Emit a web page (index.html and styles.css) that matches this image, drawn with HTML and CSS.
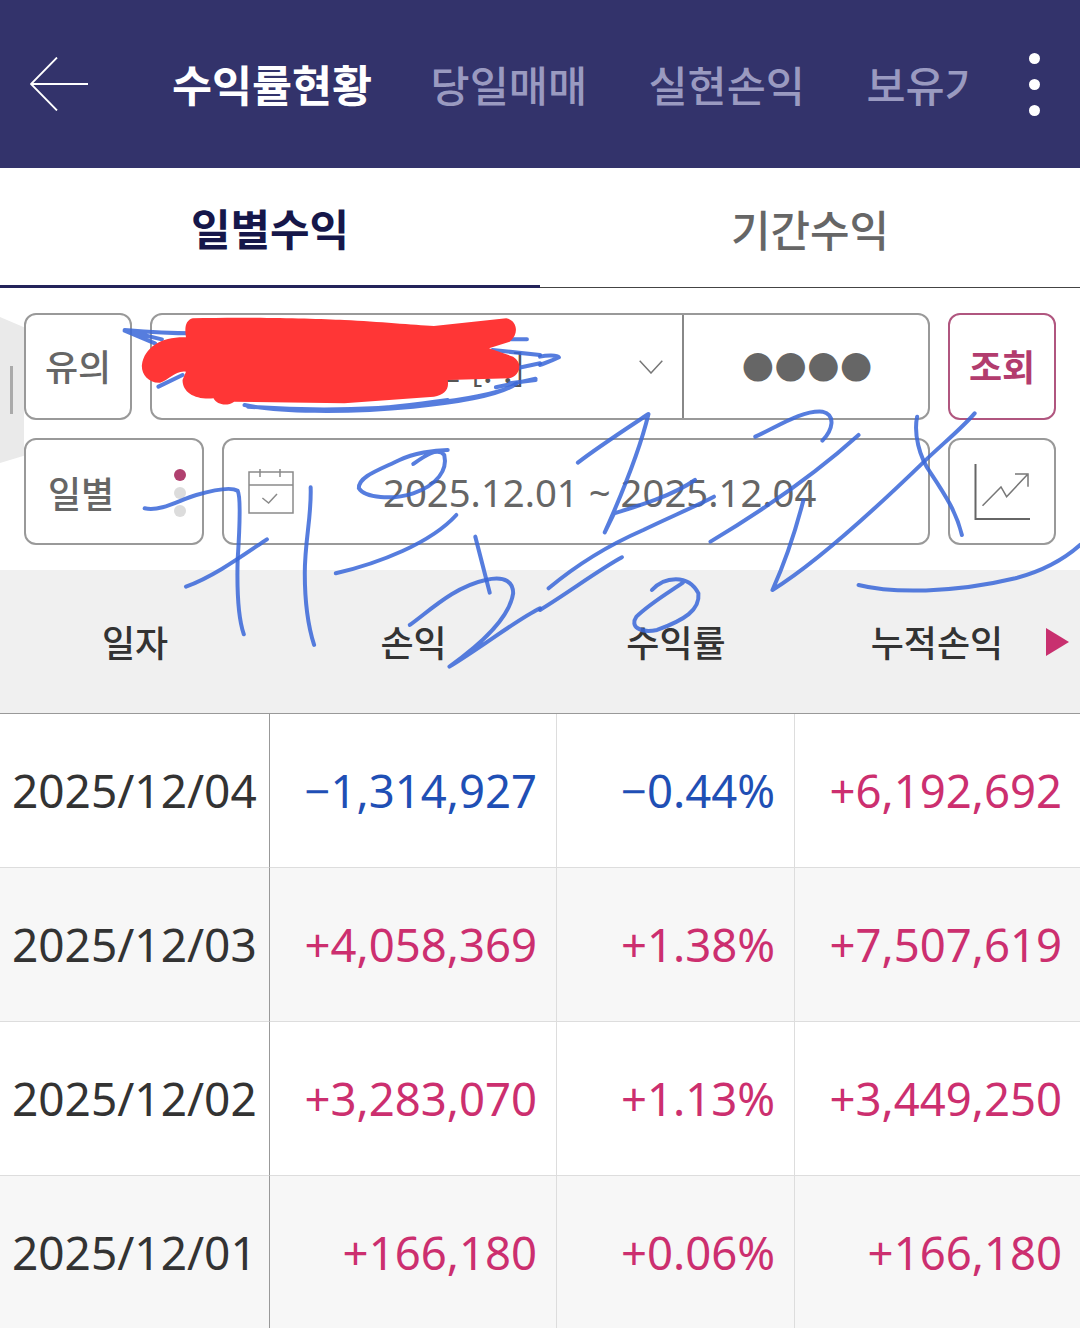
FILE: index.html
```html
<!DOCTYPE html>
<html lang="ko">
<head>
<meta charset="utf-8">
<title>수익률현황</title>
<link rel="stylesheet" href="styles.css">
</head>
<body>
<div class="page">
  <header class="appbar">
    <svg class="back" viewBox="0 0 58 54"><path d="M27 .5 1 27l26 26.500M1 27h57"/></svg>
    <nav class="menu">
      <span class="menu-item is-active">수익률현황</span>
      <span class="menu-item">당일매매</span>
      <span class="menu-item">실현손익</span>
      <span class="menu-item">보유기</span>
    </nav>
    <div class="more"><i></i><i></i><i></i></div>
  </header>

  <div class="subtabs">
    <div class="subtab is-active">일별수익</div>
    <div class="subtab">기간수익</div>
  </div>

  <section class="filters">
    <div class="filter-row">
      <div class="box btn-side">유의</div>
      <div class="box account">
        <div class="account-select">
          <span class="account-name">계좌번호 [. .]</span>
          <svg class="chevron" viewBox="0 0 24 14"><path d="M.7.7 12 13 23.300.7"/></svg>
        </div>
        <div class="account-pin">●●●●</div>
      </div>
      <div class="box btn-side btn-query">조회</div>
    </div>
    <div class="filter-row">
      <div class="box period">
        <span>일별</span>
        <div class="period-dots"><i class="on"></i><i></i><i></i></div>
      </div>
      <div class="box range">
        <svg class="calendar" viewBox="0 0 46 47"><path d="M1 4h44v41H1zM1 17h44M12 1v8M32 1v8M14.400 30l6.200 5L29 26"/></svg>
        <span class="range-text">2025.12.01 ~ 2025.12.04</span>
      </div>
      <div class="box btn-side">
        <svg class="chart" viewBox="0 0 57 56"><path class="axis" d="M1.500 0v55H56"/><path d="M8.500 41.700 27 23l5.600 9.700L53 11M41 10h13v12.700"/></svg>
      </div>
    </div>
  </section>

  <section class="table">
    <div class="thead">
      <div>일자</div><div>손익</div><div>수익률</div>
      <div class="thead-last">누적손익<span class="next"></span></div>
    </div>
    <div class="row">
      <div class="cell date">2025/12/04</div><div class="cell down">−1,314,927</div><div class="cell down">−0.44%</div><div class="cell up">+6,192,692</div>
    </div>
    <div class="row">
      <div class="cell date">2025/12/03</div><div class="cell up">+4,058,369</div><div class="cell up">+1.38%</div><div class="cell up">+7,507,619</div>
    </div>
    <div class="row">
      <div class="cell date">2025/12/02</div><div class="cell up">+3,283,070</div><div class="cell up">+1.13%</div><div class="cell up">+3,449,250</div>
    </div>
    <div class="row">
      <div class="cell date">2025/12/01</div><div class="cell up">+166,180</div><div class="cell up">+0.06%</div><div class="cell up">+166,180</div>
    </div>
  </section>

  <div class="edge-handle"><i></i></div>

  <svg class="markup" viewBox="0 0 1080 1328">
    <g transform="translate(0 300) scale(.3444 .3333)">
      <g class="ink">
        <path d="M362 90C420 95 480 100 560 100M362 92 450 130M380 96 470 118M460 260 530 225M1430 150 1568 165M1480 118 1530 118M1500 205 1568 190M1480 250 1555 240M1440 262 1555 236"/>
        <path d="M710 315C800 335 1000 340 1200 320 1300 310 1450 290 1500 250M720 320C850 330 1050 335 1250 310 1350 300 1440 280 1480 262M800 325C950 340 1100 330 1300 300"/>
        <path d="M420 625C470 635 520 600 570 585 620 570 670 560 690 572 700 590 695 700 690 780 688 860 690 950 708 1003"/>
        <path d="M540 860C620 830 700 770 775 718"/>
        <path d="M902 562C905 650 885 720 885 820 885 900 895 980 912 1035"/>
        <path d="M1200 492C1230 470 1270 440 1290 465 1300 510 1270 555 1200 580 1140 600 1060 595 1042 565 1040 530 1100 510 1160 480 1200 460 1260 450 1300 450"/>
        <path d="M975 820C1100 790 1250 730 1325 645"/>
        <path d="M1380 710C1395 770 1410 830 1422 878"/>
        <path d="M1190 975C1250 930 1320 860 1410 840 1470 825 1490 850 1490 880 1480 950 1400 1030 1305 1100 1400 1040 1500 960 1568 925"/>
      </g>
      <path class="blot" d="M560 55C700 50 900 55 1000 60 1100 65 1200 75 1260 78L1470 55C1500 60 1510 100 1480 125L1420 145 1490 170C1520 190 1510 225 1480 235L1300 240C1305 270 1290 285 1260 290L1000 310 680 305C660 320 630 315 620 295 570 300 530 280 530 240L540 215C510 210 490 240 465 248 430 250 410 220 412 195 420 140 470 110 540 112 535 80 540 60 560 55Z"/>
    </g>
    <g class="ink" transform="translate(540 300) scale(.3444 .3333)">
      <path d="M0 170C20 165 50 165 55 172 30 185 10 190 0 195"/>
      <path d="M25 865C100 800 200 735 300 690 380 650 450 620 505 590"/>
      <path d="M0 930C80 880 170 810 238 772"/>
      <path d="M110 488C170 440 260 380 315 342 290 450 230 600 188 697L215 640C280 620 380 590 450 540"/>
      <path d="M625 410C690 380 760 330 820 335 860 345 850 390 820 422"/>
      <path d="M495 725C600 660 780 540 925 405"/>
      <path d="M765 600C740 700 710 790 675 870 800 790 980 620 1110 490 1170 430 1220 390 1262 340"/>
      <path d="M1095 350C1085 400 1100 470 1135 520 1180 590 1210 640 1225 705"/>
      <path d="M925 855C1020 880 1200 880 1380 835 1470 810 1530 770 1568 735"/>
      <path d="M325 870C360 830 430 820 460 880 465 930 420 960 340 990 290 1000 260 980 280 950 320 910 370 880 415 848"/>
    </g>
  </svg>
</div>
</body>
</html>
```
FILE: styles.css
```css
* { box-sizing: border-box; }
html, body { margin: 0; padding: 0; background: #fff; }
.page {
  position: relative;
  width: 1080px;
  height: 1328px;
  overflow: hidden;
  font-family: "Noto Sans CJK KR", "Noto Sans", sans-serif;
}

/* App bar */
.appbar {
  display: flex;
  align-items: center;
  height: 168px;
  background: #33336b;
}
.back {
  flex: none;
  width: 58px;
  height: 54px;
  margin-left: 30px;
  fill: none;
  stroke: #fff;
  stroke-width: 1.8;
}
.menu {
  flex: none;
  display: flex;
  gap: 61.500px;
  width: 801px;
  margin-left: 84px;
  overflow: hidden;
  white-space: nowrap;
}
.menu-item {
  font-size: 42.500px;
  font-weight: 500;
  line-height: 60px;
  color: #9a9ac0;
}
.menu-item.is-active {
  margin-right: -3px;
  font-size: 43.500px;
  font-weight: 700;
  color: #fff;
}
.more {
  display: flex;
  flex-direction: column;
  gap: 15px;
  margin-left: 56px;
}
.more i {
  display: block;
  width: 11px;
  height: 11px;
  border-radius: 50%;
  background: #fff;
}

/* Sub tabs */
.subtabs {
  display: grid;
  grid-template-columns: 1fr 1fr;
  height: 120px;
}
.subtab {
  display: flex;
  align-items: center;
  justify-content: center;
  font-size: 43px;
  font-weight: 500;
  color: #666;
  border-bottom: 1px solid #444;
}
.subtab.is-active {
  font-weight: 700;
  color: #16174a;
  border-bottom: 3px solid #23235a;
}

/* Filters */
.filters {
  display: flex;
  flex-direction: column;
  gap: 18px;
  padding: 25px 24px;
}
.filter-row {
  display: flex;
  gap: 18px;
  height: 107px;
}
.box {
  display: flex;
  align-items: center;
  justify-content: center;
  border: 2px solid #999;
  border-radius: 12px;
  font-size: 36px;
  font-weight: 500;
  color: #666;
  background: #fff;
}
.btn-side { flex: none; width: 108px; }
.filter-row:first-child .btn-side { padding-bottom: 4px; }
.btn-query {
  border-color: #b0567f;
  font-weight: 700;
  color: #b23c6e;
}
.account { flex: 1; justify-content: flex-start; }
.account-select {
  display: flex;
  align-items: center;
  flex: none;
  width: 532px;
  height: 100%;
  border-right: 2px solid #888;
}
.account-name {
  flex: none;
  width: 373px;
  text-align: right;
  white-space: nowrap;
  font-weight: 400;
  color: #555;
}
.chevron {
  width: 24px;
  height: 14px;
  margin-left: 114px;
  fill: none;
  stroke: #777;
  stroke-width: 1.500;
}
.account-pin {
  flex: 1;
  padding: 0 0 4px 2px;
  text-align: center;
  font-family: "DejaVu Sans", sans-serif;
  font-size: 37.500px;
  line-height: 1;
  color: #666;
}
.period {
  flex: none;
  width: 180px;
  justify-content: flex-start;
  padding-left: 22px;
  position: relative;
}
.period-dots {
  position: absolute;
  left: 148px;
  top: 29px;
  display: flex;
  flex-direction: column;
  gap: 6px;
}
.period-dots i {
  display: block;
  width: 12px;
  height: 12px;
  border-radius: 50%;
  background: #dcdcdc;
}
.period-dots i.on { background: #b0406f; }
.range {
  flex: 1;
  justify-content: flex-start;
  padding-left: 24px;
}
.calendar {
  flex: none;
  width: 46px;
  height: 47px;
  fill: none;
  stroke: #8a8a8a;
  stroke-width: 1.500;
}
.range-text {
  margin-left: 89px;
  font-family: "Noto Sans", sans-serif;
  font-size: 38.300px;
  font-weight: 400;
  color: #666;
  white-space: nowrap;
}
.chart {
  width: 57px;
  height: 56px;
  fill: none;
  stroke: #777;
  stroke-width: 1.500;
}
.chart .axis { stroke: #666; stroke-width: 2; }

/* Table */
.thead,
.row {
  display: grid;
  grid-template-columns: 270px 287px 238px 285px;
}
.thead {
  height: 144px;
  align-items: center;
  background: #f0f0f0;
  border-bottom: 1px solid #999;
  font-size: 36px;
  font-weight: 500;
  color: #333;
  text-align: center;
}
.thead > div { padding-bottom: 1px; }
.thead-last { position: relative; padding-right: 1px; }
.next {
  position: absolute;
  right: 11px;
  top: 50%;
  margin-top: -14px;
  border-left: 23px solid #c8306f;
  border-top: 14px solid transparent;
  border-bottom: 14px solid transparent;
}
.row { height: 154px; }
.row:nth-child(odd) { background: #f7f7f7; }
.cell {
  display: flex;
  align-items: center;
  justify-content: flex-end;
  padding: 0 19px 2px 0;
  border-right: 1px solid #ddd;
  border-bottom: 1px solid #ddd;
  font-family: "Noto Sans", sans-serif;
  font-size: 45.500px;
  font-weight: 400;
  white-space: nowrap;
}
.cell:last-child { border-right: 0; padding-right: 18px; }
.date {
  justify-content: flex-start;
  padding: 0 0 2px 12px;
  border-right-color: #999;
  font-size: 46px;
  color: #333;
}
.down { color: #1f4fb5; }
.up { color: #cc2f6f; }

/* Overlays */
.edge-handle {
  position: absolute;
  left: 0;
  top: 317px;
  width: 24px;
  height: 146px;
  background: #eaeaea;
  clip-path: polygon(0 0, 100% 7%, 100% 95%, 0 100%);
}
.edge-handle i {
  position: absolute;
  left: 10px;
  top: 49px;
  width: 3px;
  height: 48px;
  background: #aaa;
}
.markup {
  position: absolute;
  left: 0;
  top: 0;
  width: 1080px;
  height: 1328px;
  pointer-events: none;
}
.ink path {
  fill: none;
  stroke: #3866d8;
  stroke-width: 4px;
  stroke-linecap: round;
  stroke-linejoin: round;
  stroke-opacity: .85;
  vector-effect: non-scaling-stroke;
}
.blot { fill: #ff3636; }
```
